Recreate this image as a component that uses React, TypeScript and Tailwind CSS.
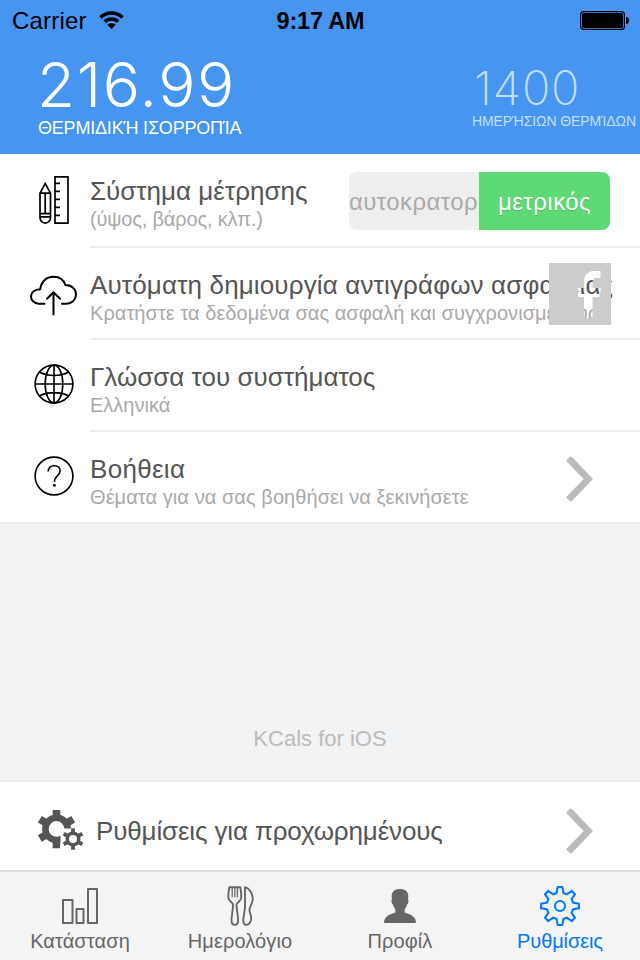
import React from "react";

function Chevron() {
  return (
    <svg className="h-[46px] w-[28px]" viewBox="0 0 28 46" fill="#bbb" stroke="#bbb" strokeWidth="2.4" strokeLinejoin="round">
      <path d="M1.600 4.700 4.900 1.700 25.400 23 4.900 44.300 1.600 41.300 19.300 23z" />
    </svg>
  );
}

function RulerIcon() {
  return (
    <svg className="h-12 w-8" viewBox="0 0 32 48" fill="none" stroke="#000" strokeWidth="1.7">
      <path d="M17 .9h13v46.2H17zM17 7.4h5M17 15.4h5M17 23.4h5M17 31.4h5M17 39.4h5" />
      <path d="M2 17.2 7.2 7.5l5.3 9.7v24.6a5.2 5.2 0 0 1-10.5 0zM2 17.2h10.5M7.2 17.2v20.4M2 37.7h10.5M2 40.9h10.5" />
    </svg>
  );
}

function CloudIcon() {
  return (
    <svg className="h-[41px] w-[47px]" viewBox="0 0 47 41" fill="none" stroke="#000" strokeWidth="2" strokeLinecap="round" strokeLinejoin="round">
      <path d="M14.500 28.700H8.700C4.500 28.700 1 25.500 1 21.500c0-4 3.300-7.100 9.300-7.300C11 7 16.300 1.800 23.500 1.800c5.700 0 10.200 3 12 8.300C42 10.300 46 14.200 46 19.500c0 5.200-4 9.200-9.500 9.200H32M23.500 39.500V17.500M17 23.800l6.500-6.500 6.500 6.500" />
    </svg>
  );
}

function GlobeIcon() {
  return (
    <svg className="size-10" viewBox="0 0 40 40" fill="none" stroke="#000" strokeWidth="1.6">
      <circle cx="20" cy="20" r="18.900" />
      <ellipse cx="20" cy="20" rx="8.800" ry="18.900" />
      <path d="M20 1v38M1 20h38M5.800 8.200c7.500 4.300 20.900 4.300 28.400 0M5.800 31.800c7.500-4.300 20.900-4.300 28.400 0" />
    </svg>
  );
}

function HelpIcon() {
  return (
    <svg className="size-10" viewBox="0 0 40 40" fill="none" stroke="#000" strokeWidth="1.6">
      <circle cx="20" cy="20" r="18.900" />
      <path d="M14.200 15.600c0-3.700 2.300-5.800 6-5.800s5.900 2.100 5.900 5.200c0 4.800-5.600 5-5.600 10v1" />
      <circle cx="20.400" cy="29.300" r="1.500" fill="#000" stroke="none" />
    </svg>
  );
}

function gearPath(cx: number, cy: number, teeth: number, outer: number, root: number, top: number, base: number, start: number) {
  const pts: string[] = [];
  for (let i = 0; i < teeth; i++) {
    const a = start + (i * 2 * Math.PI) / teeth;
    const corners = [
      [root, -base],
      [outer, -top],
      [outer, top],
      [root, base],
    ];
    for (const [r, t] of corners) {
      pts.push(`${(cx + r * Math.cos(a) - t * Math.sin(a)).toFixed(2)} ${(cy + r * Math.sin(a) + t * Math.cos(a)).toFixed(2)}`);
    }
  }
  return `M${pts.join("L")}Z`;
}

function GearsIcon() {
  return (
    <svg className="h-[42px] w-[47px]" viewBox="0 0 47 42" fill="#555">
      <path d={gearPath(19.5, 18.9, 6, 19.300, 12, 3.800, 3.800, -Math.PI / 2)} />
      <circle cx="19.500" cy="18.900" r="14.400" />
      <circle cx="19.500" cy="18.900" r="7.800" fill="#fff" />
      <path d="M23.500 26V18.500H47V42H23.500Z" fill="#fff" />
      <path d={gearPath(36, 29, 6, 10.800, 5, 1.900, 1.900, -Math.PI / 2)} />
      <circle cx="36" cy="29" r="7.500" />
      <circle cx="36" cy="29" r="4" fill="#fff" />
    </svg>
  );
}

function SettingsIcon() {
  return (
    <svg className="size-10" viewBox="0 0 40 40" fill="none" stroke="#007aff" strokeWidth="2.1" strokeLinejoin="round">
      <path d={gearPath(20, 20, 8, 19, 13, 2.300, 3.400, 0)} />
      <circle cx="20" cy="20" r="5" />
    </svg>
  );
}

function BarsIcon() {
  return (
    <svg className="h-9 w-9" viewBox="0 0 36 36" fill="none" stroke="#666" strokeWidth="2" strokeLinejoin="round">
      <path d="M1 12h9.500v23H1zM14.500 21h7v14h-7zM26 1h9v34h-9z" />
    </svg>
  );
}

function CutleryIcon() {
  return (
    <svg className="h-10 w-[27px]" viewBox="0 0 27 40" fill="none" stroke="#666" strokeWidth="1.900" strokeLinejoin="round">
      <path d="M2.300 1.200C1.500 5 1.200 9 1.400 12c.2 3.400 4.300 4.300 4.600 6.500.3 2.500-1.500 12-1.500 16 0 3 1.300 4.400 3.300 4.400s3.300-1.400 3.300-4.400c0-4-1.800-13.500-1.500-16 .3-2.200 4.400-3.100 4.600-6.500.2-3-.100-7-.900-10.800z" />
      <path strokeWidth="1.300" d="M5.200 1.500v9.700M7.800 1.500v9.700M10.400 1.500v9.700" />
      <path d="M18 1.200v20.500c-.4 4-1.700 9-1.700 12.800 0 3 1.200 4.400 3.200 4.400s4.700-2.600 4.700-6.600c0-3.500-2-6-1.700-9 .3-3.300 3.300-5.600 3.300-10.800 0-5-3.600-10.300-7.800-11.300z" />
    </svg>
  );
}

function ProfileIcon() {
  return (
    <svg className="h-[34px] w-8" viewBox="0 0 32 34" fill="#666">
      <path d="M16 0c5 0 8.300 2.500 8.300 7 0 1.500-.3 2.800-.3 3.600 1 .6.500 4.400-1 5-.4 2-1.300 3.600-2.300 4.800v3.200c3.800 2 11.300 2.500 11.300 10.400H0c0-7.900 7.500-8.400 11.300-10.400v-3.200C10.300 19.200 9.400 17.600 9 15.600c-1.500-.6-2-4.400-1-5 0-.8-.3-2.100-.3-3.600C7.700 2.500 11 0 16 0z" />
    </svg>
  );
}

type RowProps = { icon: React.ReactNode; title: React.ReactNode; sub: React.ReactNode; last?: boolean; children?: React.ReactNode };

function Row({ icon, title, sub, last, children }: RowProps) {
  return (
    <div className={`flex ${last ? "h-[90px]" : "h-[92px]"}`}>
      <div className="flex w-[90px] shrink-0 justify-center pl-[18px]">{icon}</div>
      <div className={`relative flex min-w-0 grow whitespace-nowrap ${last ? "" : "border-b-2 border-[#ececec]"}`}>
        <div className="flex flex-col pt-[22px]">
          <div className="text-[26px] leading-[30px] text-[#555]">{title}</div>
          <div className="text-[20px] leading-[26px] text-[#aaa]">{sub}</div>
        </div>
        {children}
      </div>
    </div>
  );
}

function Tab({ icon, label, active }: { icon: React.ReactNode; label: string; active?: boolean }) {
  return (
    <div className={`flex flex-col items-center pt-[14px] ${active ? "tracking-[-0.1px] text-[#007aff]" : "tracking-[0.1px] text-[#666]"}`}>
      <div className="flex h-10 items-center">{icon}</div>
      <span>{label}</span>
    </div>
  );
}

export default function App() {
  return (
    <div className="flex h-[960px] w-[640px] flex-col overflow-hidden bg-[#f2f3f5] font-['Liberation_Sans',sans-serif]">
      <header className="flex h-[154px] shrink-0 flex-col bg-[#4595f1]">
        <div className="flex h-10 items-center justify-between pr-[11px] pl-3 text-[24px] text-black">
          <div className="flex w-[200px] items-center gap-3">
            <span className="pt-[2px] tracking-[0.2px]">Carrier</span>
            <svg className="h-[18px] w-[25px]" viewBox="0 0 25 18" fill="none" stroke="#000" strokeWidth="3.500">
              <path d="M1.500 6.500a15.500 15.500 0 0 1 22 0M5.800 10.800a9.500 9.500 0 0 1 13.400 0" />
              <path d="M12.500 18 8.300 13.800a6 6 0 0 1 8.400 0z" fill="#000" stroke="none" />
            </svg>
          </div>
          <span className="pt-[3px] text-[23.500px] font-bold tracking-[-0.2px]">9:17 AM</span>
          <div className="flex w-[200px] justify-end">
            <svg className="h-[19px] w-[49px]" viewBox="0 0 49 19">
              <rect x=".6" y=".6" width="43.800" height="17.800" rx="3" fill="none" stroke="#000" strokeWidth="1.200" />
              <rect x="2" y="2" width="41" height="15" rx="1.500" />
              <path d="M46 6c4 0 4 7 0 7z" />
            </svg>
          </div>
        </div>
        <div className="flex justify-between whitespace-nowrap text-white">
          <div className="flex flex-col items-start pt-3 pl-[37px]">
            <span className="h-[64px] font-['Inter'] text-[62px] leading-[65px] font-light tracking-[1.6px]">216.99</span>
            <span className="pl-px text-[18px] leading-[24px] tracking-[-0.2px]">ΘΕΡΜΙΔΙΚΉ ΙΣΟΡΡΟΠΊΑ</span>
          </div>
          <div className="flex w-[168px] flex-col items-start pt-[24px] text-white/70">
            <span className="pl-[2px] font-['Inter'] text-[47px] leading-[48px] font-extralight tracking-[0.7px]">1400</span>
            <span className="text-[14px] leading-[18px] tracking-[-0.1px]">ΗΜΕΡΉΣΙΩΝ ΘΕΡΜΊΔΩΝ</span>
          </div>
        </div>
      </header>
      <main className="flex flex-col border-b-2 border-[#ececec] bg-white">
        <div className="flex h-[94px]">
          <div className="flex w-[90px] shrink-0 justify-center pt-[22px] pl-[18px]"><RulerIcon /></div>
          <div className="flex grow border-b-2 border-[#ececec] whitespace-nowrap">
            <div className="flex flex-col pt-[22px]">
              <div className="text-[26px] leading-[30px] text-[#555]">Σύστημα μέτρησης</div>
              <div className="text-[20px] leading-[26px] tracking-[-0.17px] text-[#aaa]">(ύψος, βάρος, κλπ.)</div>
            </div>
            <div className="mt-[18px] mr-[30px] ml-auto flex h-[58px] w-[261px] overflow-hidden rounded-lg text-[24px] leading-[60px]">
              <div className="w-[130px] overflow-hidden bg-[#eee] tracking-[0.4px] text-[#aaa]">αυτοκρατορ</div>
              <div className="grow bg-[#5ed975] text-center tracking-[0.45px] text-white [text-shadow:0_1px_1px_rgba(0,0,0,0.15)]">μετρικός</div>
            </div>
          </div>
        </div>
        <Row
          icon={<div className="pt-[27px] pr-px"><CloudIcon /></div>}
          title={<span className="tracking-[0.14px]">Αυτόματη δημιουργία αντιγράφων ασφαλείας</span>}
          sub={<span className="tracking-[0.04px]">Κρατήστε τα δεδομένα σας ασφαλή και συγχρονισμένους</span>}
        >
          <svg className="absolute top-[15px] left-[459px] size-[62px]" viewBox="0 0 62 62">
            <path fill="#ccc" fillRule="evenodd" d="M0 0h62v62H0zM35 55h8.500V34h7l1.300-9h-8.300v-5c0-3 1.200-5 4.500-5h3.500V8h-6c-7 0-10.500 4-10.500 11v6h-6v9h6z" />
          </svg>
        </Row>
        <Row icon={<div className="pt-6"><GlobeIcon /></div>} title="Γλώσσα του συστήματος" sub="Ελληνικά" />
        <Row
          last
          icon={<div className="pt-6"><HelpIcon /></div>}
          title={<span className="tracking-[0.3px]">Βοήθεια</span>}
          sub={<span className="tracking-[0.07px]">Θέματα για να σας βοηθήσει να ξεκινήσετε</span>}
        >
          <div className="mt-6 mr-[46px] ml-auto"><Chevron /></div>
        </Row>
      </main>
      <div className="flex grow flex-col items-center justify-end pb-[27px] text-[22px] leading-[28px] text-[#bbb]">
        <span>KCals for iOS</span>
      </div>
      <div className="flex h-[90px] items-center border-t-2 border-[#ececec] bg-white pt-[10px] pl-[37px] text-[26px] text-[#555]">
        <GearsIcon />
        <span className="ml-3 tracking-[-0.15px]">Ρυθμίσεις για προχωρημένους</span>
        <div className="mr-[46px] ml-auto"><Chevron /></div>
      </div>
      <nav className="grid h-[90px] grid-cols-4 border-t-2 border-[#ddd] bg-[#f4f4f4] text-[20px]">
        <Tab icon={<BarsIcon />} label="Κατάσταση" />
        <Tab icon={<CutleryIcon />} label="Ημερολόγιο" />
        <Tab icon={<ProfileIcon />} label="Προφίλ" />
        <Tab icon={<SettingsIcon />} label="Ρυθμίσεις" active />
      </nav>
    </div>
  );
}
